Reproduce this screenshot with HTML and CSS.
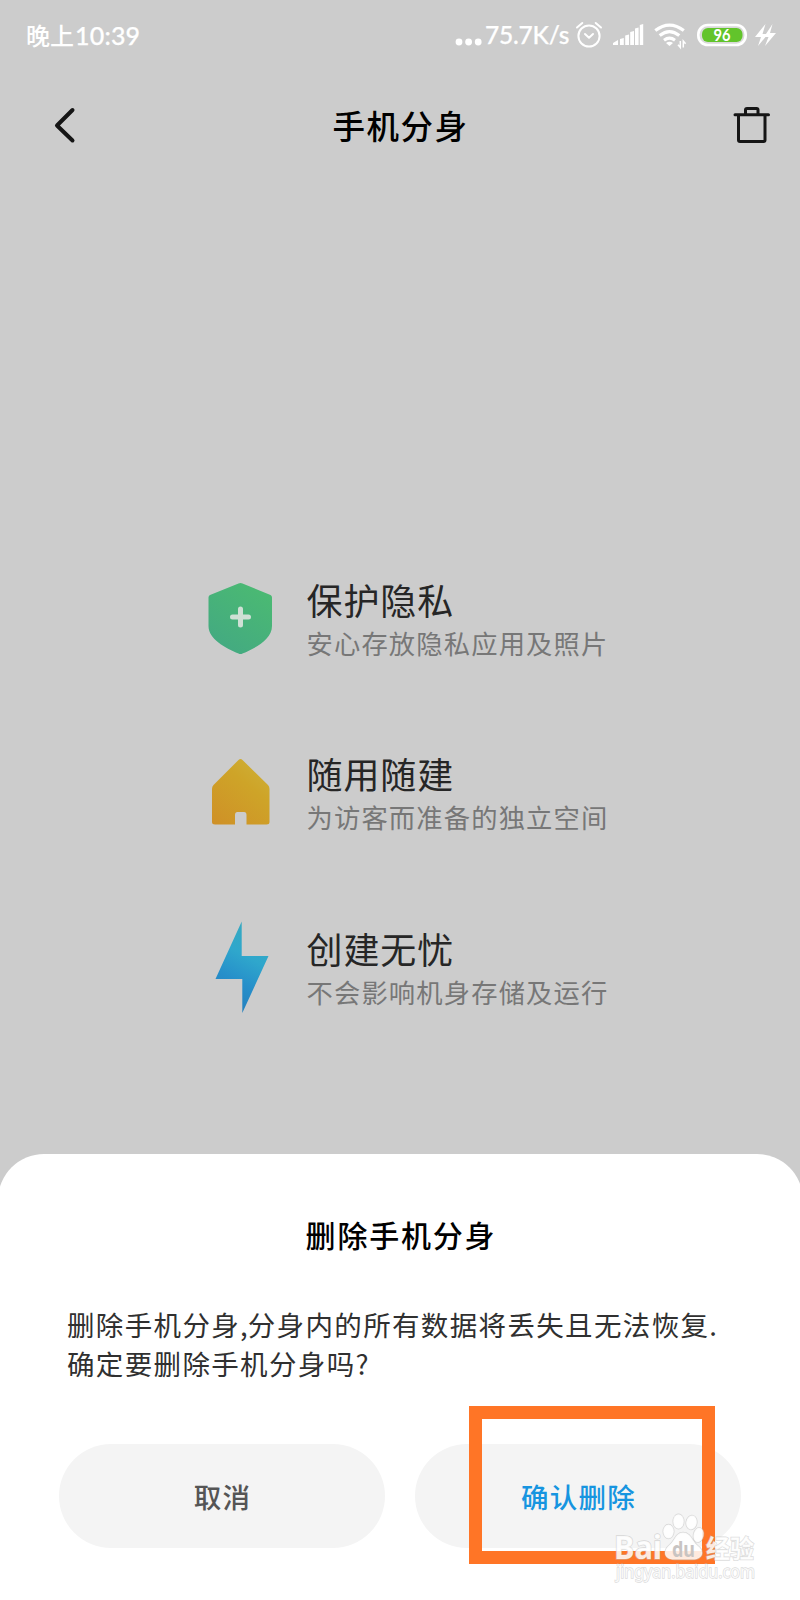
FILE: index.html
```html
<!DOCTYPE html>
<html lang="zh-CN">
<head>
<meta charset="utf-8">
<title>手机分身</title>
<link rel="stylesheet" href="styles.css">
</head>
<body>
<div class="screen">
  <header class="status">
    <div class="clock">晚上<span class="digits">10:39</span></div>
    <div class="indicators">
      <svg class="dots" width="28" height="30" viewBox="0 0 28 30"><g fill="#fff"><circle cx="4" cy="22" r="3.4"/><circle cx="13.6" cy="22" r="3.4"/><circle cx="23.2" cy="22" r="3.4"/></g></svg>
      <span class="speed">75.7K/s</span>
      <svg class="alarm" width="28" height="30" viewBox="0 0 28 30" fill="none" stroke="#fff" stroke-width="2" stroke-linecap="round" stroke-linejoin="round"><circle cx="14" cy="16" r="10.6"/><path d="M10 14l4 3.7 4-3.7M2 7.5L7.3 3M26 7.5L20.700 3"/></svg>
      <svg class="signal" width="32" height="30" viewBox="0 0 32 30" fill="#fff"><path d="M1 25v-2l5-3v5zM8 19l3.800-1v7H8zM13.200 15.500l3.800-1V25h-3.800zM18.200 12l3.800-1V25h-3.800zM23 8.500l3.600-1V25H23zM27.800 5l3.400-1V25h-3.400z"/></svg>
      <svg class="wifi" width="34" height="30" viewBox="0 0 34 30" fill="none" stroke="#fff"><path stroke-width="3.200" d="M2.300 10.600Q16.500-.4 30.800 10.600M6.700 15.600Q16.500 7.600 26.300 15.600M11 20.200Q16.500 16.200 22 20.200"/><path d="M13 23Q16.500 20.500 20 23L16.500 26z" fill="#fff" stroke="none"/><path stroke-width="1.500" d="M27.300 21v6.500l-2.300-2.800M30.300 27.500V21l2.300 2.800"/></svg>
      <svg class="battery" width="50" height="30" viewBox="0 0 50 30"><rect x="1.300" y="5" width="47.400" height="20" rx="9.500" fill="#d9d9d9" stroke="#fff" stroke-width="2.600"/><rect x="5" y="8" width="40.500" height="14" rx="6" fill="#62c42b"/><text x="16.500" y="21.200" textLength="17" lengthAdjust="spacingAndGlyphs" class="level">96</text></svg>
      <svg class="charge" width="21" height="30" viewBox="0 0 21 30" fill="#fff"><path d="M10.500 4L0 17h6L3 26 13 14H7.500z"/><path d="M17.500 4L9 17h4.500L10 26 21 13h-6z"/></svg>
    </div>
  </header>
  <nav class="bar">
    <svg class="back" width="24" height="40" viewBox="0 0 24 40" fill="none" stroke="#151515" stroke-width="4" stroke-linecap="round" stroke-linejoin="round"><path d="M20.500 5L5 20.500 20.500 35.500"/></svg>
    <h1 class="title">手机分身</h1>
    <svg class="trash" width="38" height="38" viewBox="0 0 38 38" fill="none" stroke="#151515" stroke-width="3" stroke-linecap="round" stroke-linejoin="round"><path d="M2 8.800H35.500M5.500 9V34Q5.500 35.500 7 35.500H30.500Q32 35.500 32 34V9M12.500 8V4Q12.500 2.500 14 2.500H23.500Q25 2.500 25 4V8"/></svg>
  </nav>
  <main class="features">
    <section class="feature">
      <svg class="icon" width="66" height="92" viewBox="0 0 66 92"><defs><linearGradient id="green" x1="0.200" y1="1" x2="0.800" y2="0"><stop offset="0" stop-color="#43a982"/><stop offset="1" stop-color="#4bba72"/></linearGradient></defs><path fill="url(#green)" d="M30.500 11.500Q32.500 10.300 34.500 11.500L62.500 23Q64 23.700 64 25.500V54C64 67 48 76 34.500 81.500Q32.500 82.500 30.500 81.500C17 76 .5 67 .5 54V25.500Q.5 23.700 2 23Z"/><path d="M32.500 37V53M24.500 45H40.500" stroke="#cfe0d5" stroke-width="5" stroke-linecap="round"/></svg>
      <div class="copy"><h2 class="name">保护隐私</h2><p class="note">安心存放隐私应用及照片</p></div>
    </section>
    <section class="feature">
      <svg class="icon" width="66" height="92" viewBox="0 0 66 92"><defs><linearGradient id="gold" x1="0" y1="1" x2="0.700" y2="0"><stop offset="0" stop-color="#cf9027"/><stop offset="0.700" stop-color="#cea428"/><stop offset="1" stop-color="#ceae35"/></linearGradient></defs><path fill="url(#gold)" d="M30.500 13Q32.500 11 34.500 13L60 38Q61.500 39.500 61.500 42V75Q61.500 77.500 58.500 77.500H38.500V68Q38.500 65 36 65H29.500Q27 65 27 68V77.500H7Q4 77.500 4 75V42Q4 39.500 5.500 38Z"/></svg>
      <div class="copy"><h2 class="name">随用随建</h2><p class="note">为访客而准备的独立空间</p></div>
    </section>
    <section class="feature">
      <svg class="icon" width="66" height="92" viewBox="0 0 66 92"><defs><linearGradient id="blue" x1="0.300" y1="1" x2="0.600" y2="0"><stop offset="0" stop-color="#237dbb"/><stop offset="0.350" stop-color="#268fca"/><stop offset="0.650" stop-color="#2fa7cc"/><stop offset="1" stop-color="#37a9bf"/></linearGradient></defs><path fill="url(#blue)" d="M33.700 .5V35H60.500L34.300 92V58H7.500Z"/></svg>
      <div class="copy"><h2 class="name">创建无忧</h2><p class="note">不会影响机身存储及运行</p></div>
    </section>
  </main>
  <div class="sheet">
    <h2 class="heading">删除手机分身</h2>
    <p class="message">删除手机分身<span class="comma">,</span>分身内的所有数据将丢失且无法恢复.<br>确定要删除手机分身吗?</p>
    <div class="actions">
      <div class="button cancel">取消</div>
      <div class="button confirm">确认删除</div>
    </div>
  </div>
  <div class="marker"></div>
  <svg class="watermark" width="152" height="90" viewBox="0 0 152 90">
    <g class="wm-shape">
      <ellipse cx="58.500" cy="28.500" rx="5.300" ry="7"/><ellipse cx="68.500" cy="18.500" rx="5.300" ry="7.300"/><ellipse cx="81.500" cy="19.500" rx="5.300" ry="7" transform="rotate(10 81.500 19.500)"/><ellipse cx="88.500" cy="32" rx="5" ry="7.300" transform="rotate(12 88.500 32)"/>
      <path d="M73 29.500C81 29.500 82 38 87.500 42.500C96 49 92 56.500 83 56.500C77 56.500 70 56.500 64 56.500C54 56.500 52 48 60 41.500C65 37 66 29.500 73 29.500Z"/>
      <text class="wm-brand" x="4" y="55.500" textLength="48" lengthAdjust="spacingAndGlyphs">Bai</text>
      <text class="wm-cn" x="96" y="54.500" textLength="48" lengthAdjust="spacingAndGlyphs">经验</text>
      <text class="wm-url" x="6" y="75" textLength="139" lengthAdjust="spacingAndGlyphs">jingyan.baidu.com</text>
    </g>
    <text class="wm-du" x="62" y="53.500" textLength="23" lengthAdjust="spacingAndGlyphs">du</text>
  </svg>
</div>
</body>
</html>
```

FILE: styles.css
```css
* { box-sizing: border-box; }
body { margin: 0; }
h1, h2, p { margin: 0; font-weight: 400; }
svg { display: block; flex: none; }
.screen {
  position: relative;
  width: 800px;
  height: 1600px;
  overflow: hidden;
  display: flex;
  flex-direction: column;
  background: #ccc;
  font-family: "Noto Sans CJK SC", sans-serif;
  white-space: nowrap;
}
.status {
  height: 70px;
  padding: 0 24px 0 26px;
  display: flex;
  justify-content: space-between;
  align-items: center;
  color: #fff;
}
.clock { display: flex; align-items: center; font-size: 24px; line-height: 36px; font-weight: 500; }
.digits { font: 500 25px/36px Lato, sans-serif; margin-left: 1px; letter-spacing: 0.200px; -webkit-text-stroke: 0.250px #fff; }
.indicators { display: flex; align-items: center; }
.speed { width: 85px; margin-left: 2px; font: 500 24.500px/36px Lato, sans-serif; letter-spacing: -0.200px; -webkit-text-stroke: 0.250px #fff; }
.alarm { margin-left: 5px; }
.signal { margin-left: 9px; }
.wifi { margin-left: 9px; }
.battery { margin-left: 10px; }
.charge { margin-left: 8px; }
.level { font: 700 17px Lato, sans-serif; fill: #fff; }
.bar {
  height: 110px;
  padding: 0 29px 0 52px;
  display: grid;
  grid-template-columns: 100px 1fr 122px;
  align-items: center;
}
.title { text-align: center; font-size: 32.500px; line-height: 48px; letter-spacing: 1.500px; font-weight: 500; color: #000; }
.trash { justify-self: end; }
.features { flex: 1; padding: 392px 0 0 208px; }
.feature { height: 174.500px; display: flex; gap: 32.500px; }
.copy { padding-top: 3.500px; }
.name { font-size: 36px; line-height: 46px; letter-spacing: 0.900px; color: #262626; }
.note { font-size: 26.300px; line-height: 42px; letter-spacing: 1.150px; color: #777; }
.sheet {
  height: 446px;
  margin: 0 -2.500px;
  padding: 58px 61.500px 52px;
  display: flex;
  flex-direction: column;
  background: #fff;
  border-radius: 46px 46px 0 0;
}
.heading { padding-left: 2px; text-align: center; font-size: 30px; line-height: 44px; letter-spacing: 1.800px; font-weight: 500; color: #000; }
.message { padding: 48.500px 0 0 8px; font-size: 27.500px; line-height: 39px; letter-spacing: 1.350px; color: #303030; }
.comma { letter-spacing: 0; }
.actions { margin-top: auto; display: flex; gap: 30px; }
.button {
  width: 326px;
  height: 104px;
  padding-left: 1px;
  display: flex;
  align-items: center;
  justify-content: center;
  border-radius: 52px;
  background: #f4f4f4;
  font-size: 27.500px;
  letter-spacing: 1.300px;
  font-weight: 500;
}
.cancel { color: #555; }
.confirm { color: #1795e0; }
.marker { position: absolute; left: 469px; top: 1406px; width: 246px; height: 158px; border: 13px solid #ff7526; }
.watermark { position: absolute; left: 609.500px; top: 1503px; }
.wm-shape { fill: #fff; fill-opacity: 0.850; stroke: #bdbdbd; stroke-opacity: 0.550; stroke-width: 1.400px; paint-order: stroke; }
.wm-brand { font: 700 32px "Noto Sans", sans-serif; }
.wm-cn { font: 700 25px "Noto Sans CJK SC", sans-serif; }
.wm-url { font: 400 18px "Noto Sans", sans-serif; }
.wm-du { font: 700 21px "Noto Sans", sans-serif; fill: #c8c4c2; }
```
